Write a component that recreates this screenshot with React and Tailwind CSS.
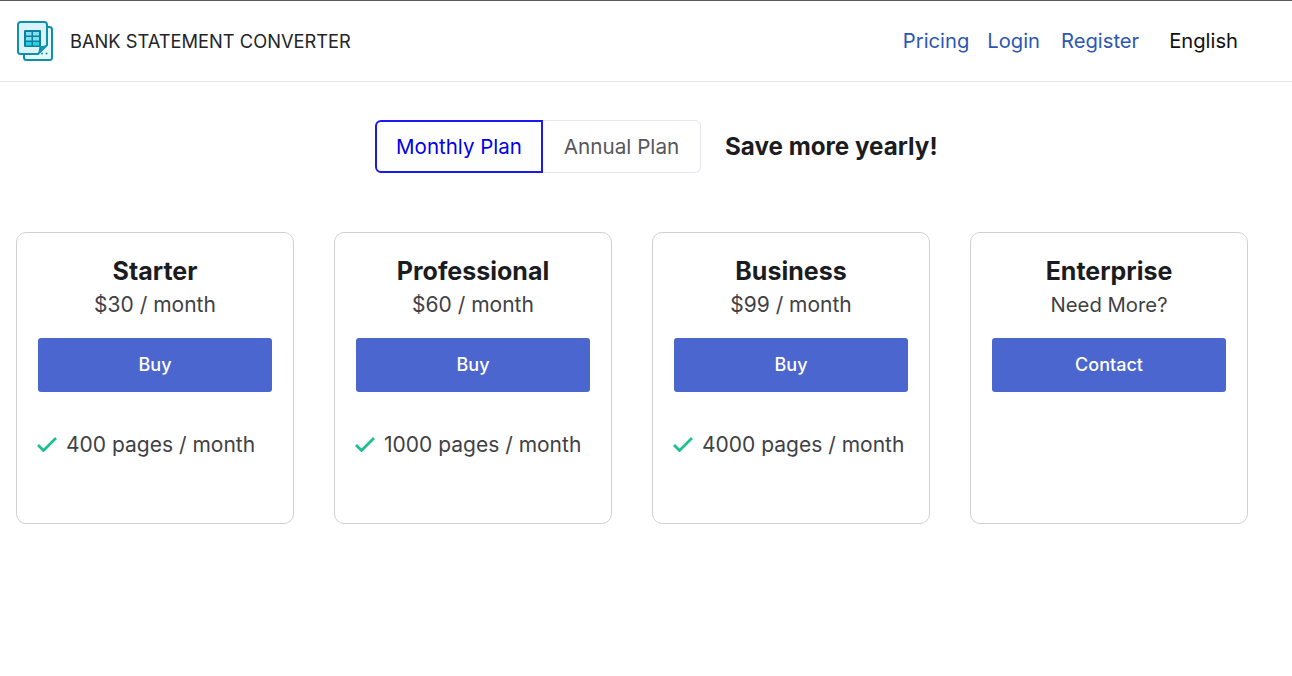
const font = { fontFamily: '"Inter", "Liberation Sans", sans-serif' };

function Logo() {
  return (
    <svg width="36" height="40" viewBox="0 0 36 40" fill="none" className="shrink-0">
      <rect x="7" y="6" width="28" height="33" rx="2.500" fill="#e6f7fa" stroke="#0e8fae" strokeWidth="2" />
      <path d="M3.500 1H27.500A2.500 2.500 0 0 1 30 3.500V24L21 33H3.500A2.500 2.500 0 0 1 1 30.500V3.500A2.500 2.500 0 0 1 3.500 1Z" fill="#d9f3f8" stroke="#0e8fae" strokeWidth="2" />
      <rect x="7" y="9" width="17" height="17" rx="1" fill="#0e7f9e" />
      <path d="M9 11h5.500v3.500H9zM16 11h6v3.500h-6zM9 16h5.500v3.500H9zM16 16h6v3.500h-6z" fill="#7fe0ee" />
      <path d="M9 21h5.500v3.500H9zM16 21h6v3.500h-6z" fill="#22d3e6" />
      <path d="M21.500 31.500l1-6 6-1z" fill="#0e8fae" />
      <circle cx="25" cy="32.500" r="1" fill="#0e8fae" />
      <circle cx="29.500" cy="32.500" r="1" fill="#0e8fae" />
    </svg>
  );
}

function Check() {
  return (
    <svg width="20" height="15" viewBox="0 0 20 15" fill="none" className="shrink-0">
      <path d="M1 8 6.500 13.500 19 1" stroke="#1fbf94" strokeWidth="2.800" />
    </svg>
  );
}

function Card({ title, sub, cta, feature, subSize = "text-[21px]" }) {
  return (
    <div className="w-[278px] h-[292px] border border-[#cfd1d3] rounded-[10px] bg-white px-[21px] pt-[22px]">
      <div className="text-center text-[25px] leading-[32px] font-bold text-[#1b1c1f]">{title}</div>
      <div className={`text-center ${subSize} leading-[34px] mt-[1px] text-[#3f4145]`}>{sub}</div>
      <button className="block w-full h-[54px] mt-[16px] pb-[1px] rounded-[3px] bg-[#4c66d0] text-white text-[18px] font-[550]">{cta}</button>
      {feature && (
        <div className="flex items-center mt-[38px] ml-[-1px] gap-[9px]">
          <span className="mt-[-4px]"><Check /></span>
          <span className="mt-[-2px] text-[21px] leading-[34px] text-[#3f4145] whitespace-nowrap">{feature}</span>
        </div>
      )}
    </div>
  );
}

export default function App() {
  return (
    <div className="w-[1292px] h-[676px] bg-white overflow-hidden" style={font}>
      <header className="h-[82px] border-t border-t-[#5a5a5a] border-b border-b-[#e3e3e3] flex items-center pl-[17px] pr-[54px]">
        <Logo />
        <span className="ml-[17px] mt-[2px] text-[18.300px] text-[#222428] whitespace-nowrap">BANK STATEMENT CONVERTER</span>
        <nav className="ml-auto flex items-center text-[20.200px]">
          <a className="text-[#2d57b4]">Pricing</a>
          <a className="ml-[18px] text-[#2d57b4]">Login</a>
          <a className="ml-[21px] text-[#2d57b4]">Register</a>
          <span className="ml-[30px] text-[#111]">English</span>
        </nav>
      </header>

      <div className="flex items-center mt-[38px] ml-[375px]">
        <div className="flex h-[53px]">
          <div className="w-[168px] pt-[1px] flex items-center justify-center border-2 border-[#1a1af0] rounded-l-[6px] text-[#0000ee] text-[20.500px] whitespace-nowrap">Monthly Plan</div>
          <div className="w-[158px] flex items-center justify-center border border-l-0 border-[#e4e6ec] rounded-r-[6px] text-[#55575b] text-[20.700px] whitespace-nowrap">Annual Plan</div>
        </div>
        <span className="ml-[24px] pt-[2px] text-[24.200px] font-bold text-[#1b1c1f] whitespace-nowrap">Save more yearly!</span>
      </div>

      <div className="flex gap-[40px] mt-[59px] ml-[16px]">
        <Card title="Starter" sub="$30 / month" cta="Buy" feature="400 pages / month" />
        <Card title="Professional" sub="$60 / month" cta="Buy" feature="1000 pages / month" />
        <Card title="Business" sub="$99 / month" cta="Buy" feature="4000 pages / month" />
        <Card title="Enterprise" sub="Need More?" cta="Contact" subSize="text-[20.300px]" />
      </div>
    </div>
  );
}
